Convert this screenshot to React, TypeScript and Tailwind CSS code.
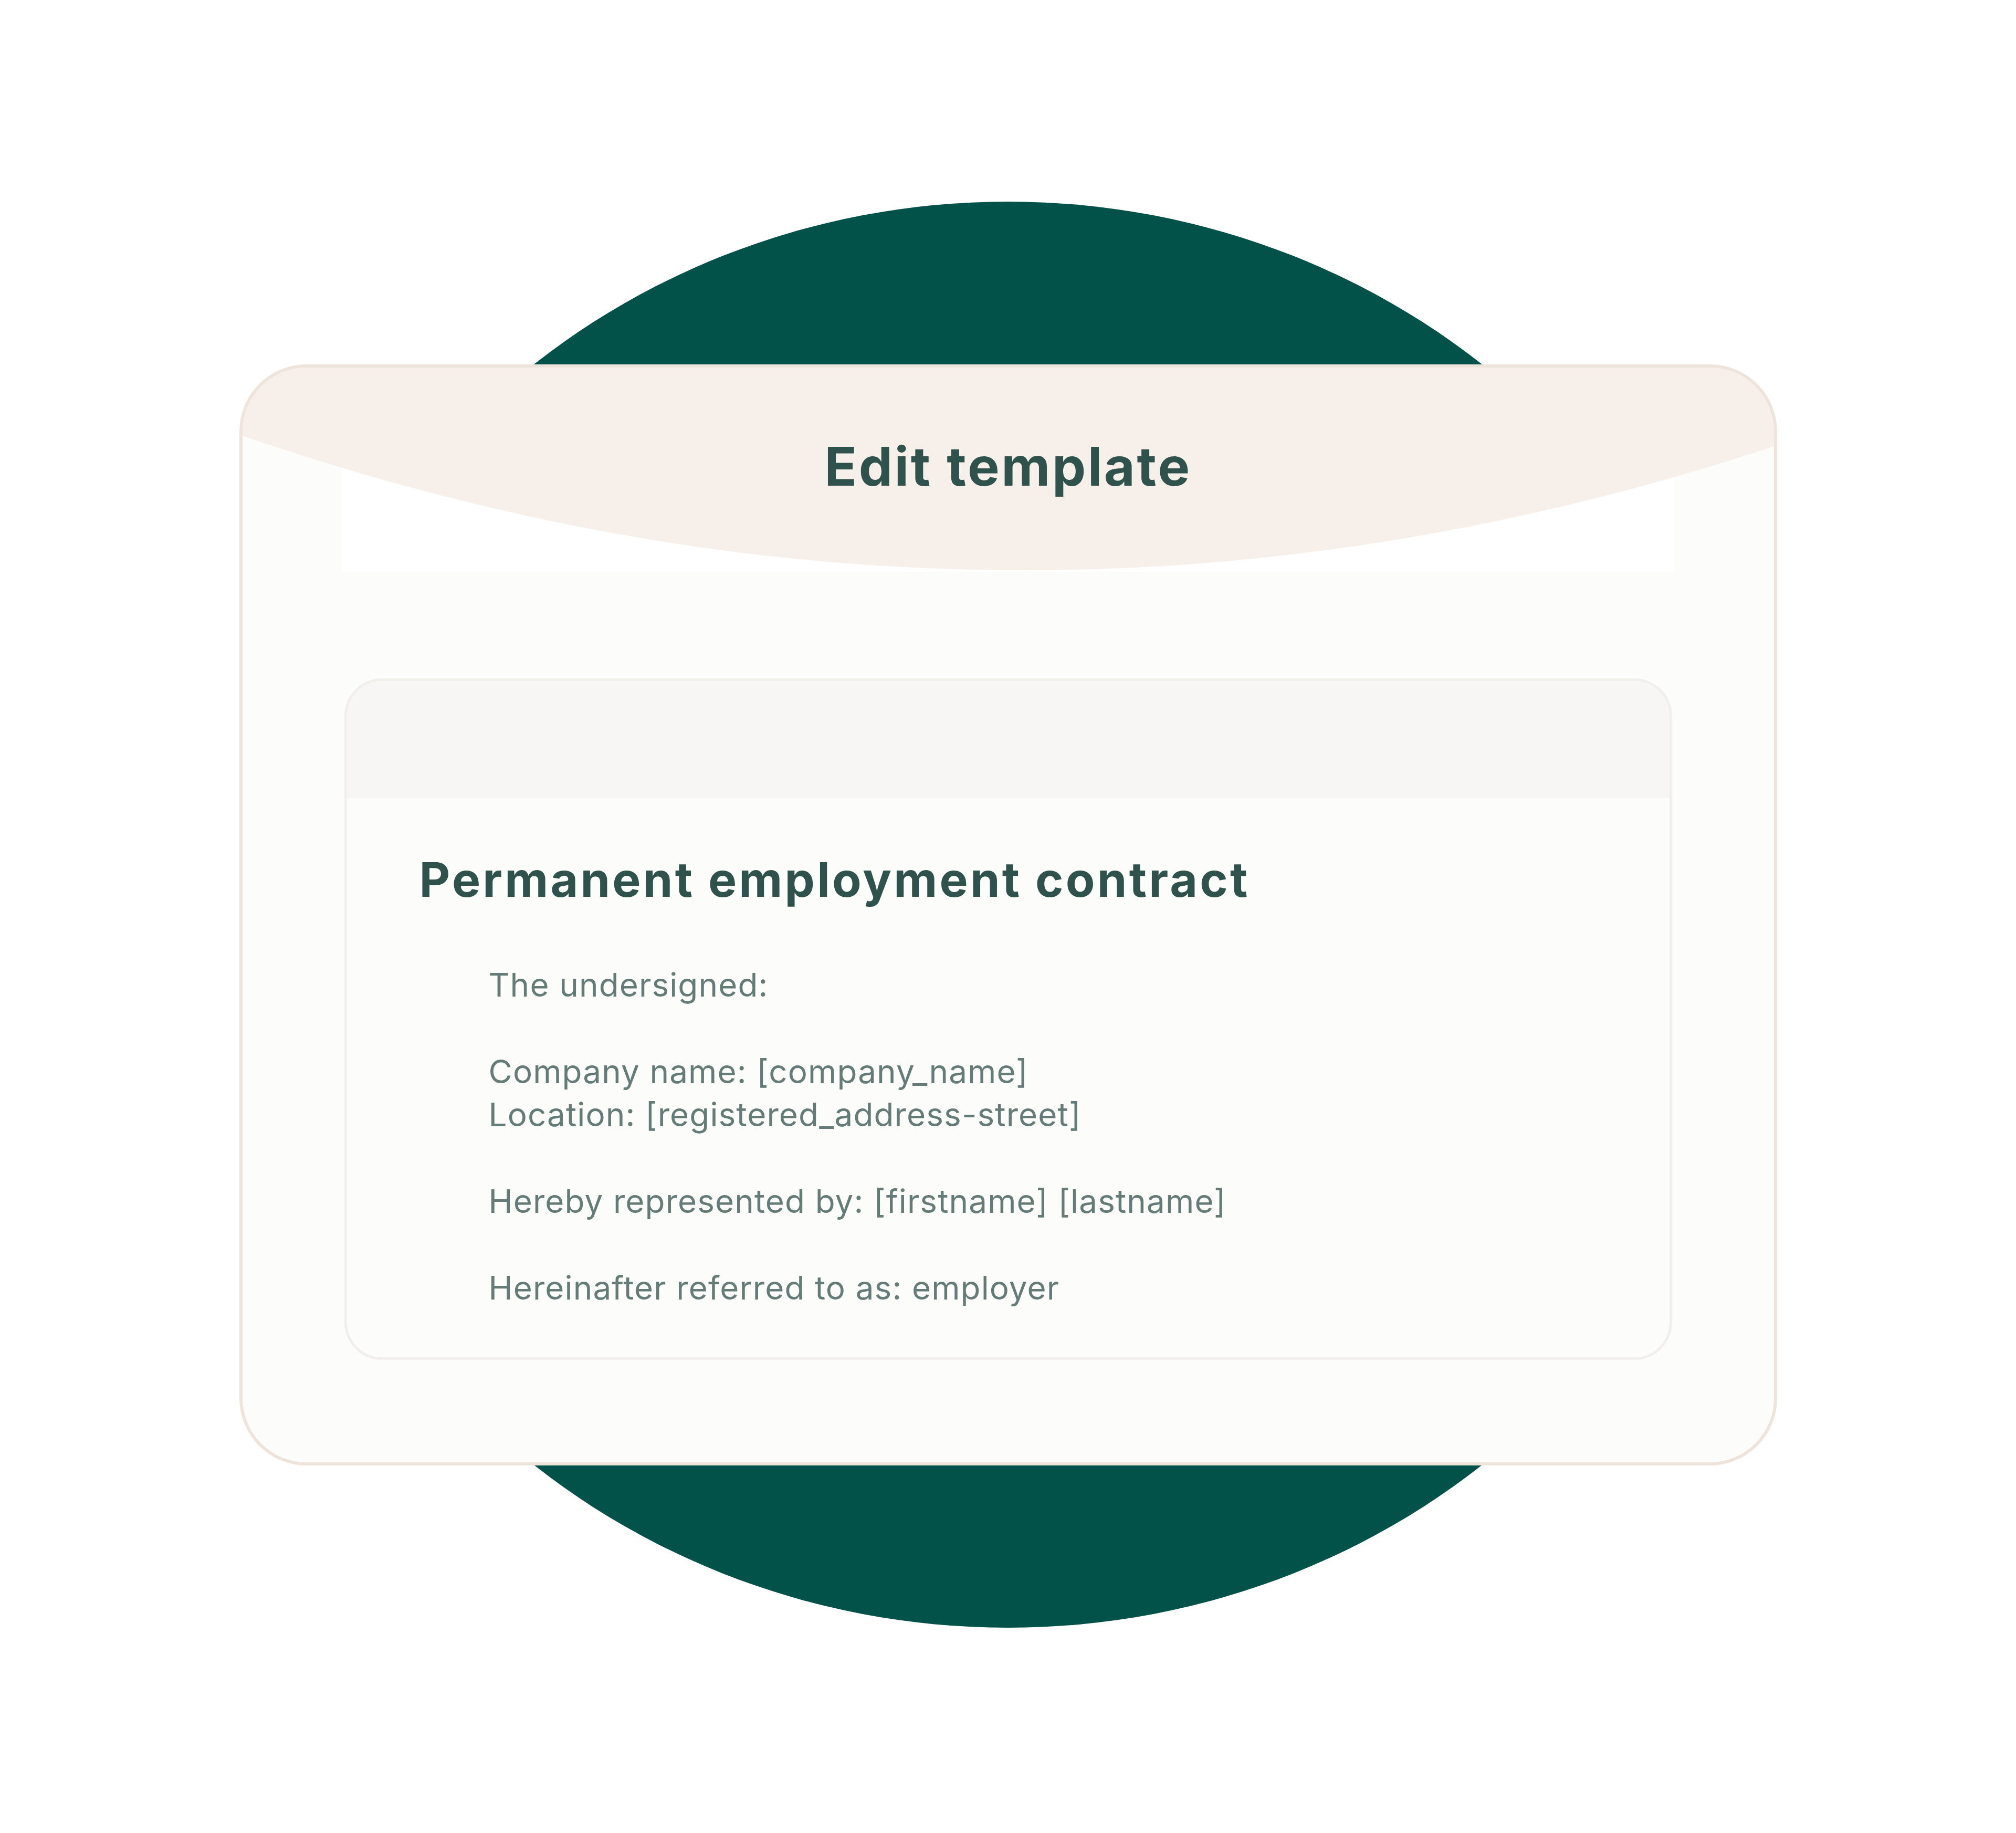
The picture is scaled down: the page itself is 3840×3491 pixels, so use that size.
const bodyLines: string[][] = [
  ['The undersigned:'],
  ['Company name: [company_name]', 'Location: [registered_address-street]'],
  ['Hereby represented by: [firstname] [lastname]'],
  ['Hereinafter referred to as: employer'],
];

function HeaderWave() {
  return (
    <svg
      className="col-start-1 row-start-1 h-[389px] w-full"
      viewBox="0 0 2917 389"
      preserveAspectRatio="none"
    >
      <path d="M0 0 H2917 V150 Q1458 632 0 130 Z" fill="#F7EFEA" />
    </svg>
  );
}

function TemplateCard() {
  return (
    <div className="col-start-1 row-start-1 w-[2929px] overflow-hidden rounded-[128px] border-[6px] border-[#EEE4DC] bg-[#FCFCFA]">
      {/* header */}
      <div className="grid h-[389px]">
        <div className="col-start-1 row-start-1 mx-[189px] bg-white" />
        <HeaderWave />
        <h2 className="col-start-1 row-start-1 mt-[127px] self-start justify-self-center text-[102px] font-bold leading-[1.2] tracking-[3.5px] text-[#30524C]">
          Edit template
        </h2>
      </div>

      {/* document preview */}
      <div className="mx-[194px] mt-[203px] mb-[195px] overflow-hidden rounded-[72px] border-[5px] border-[#F1EFEC] bg-[#FCFCFA]">
        <div className="h-[223px] bg-[#F7F6F4]" />
        <div className="pt-[100px] pb-[90px] pl-[138px]">
          <h3 className="text-[91px] font-bold leading-[110px] tracking-[4.2px] text-[#30524C]">
            Permanent employment contract
          </h3>
          <div className="mt-[105px] flex flex-col gap-[82.5px] pl-[132px] text-[62px] leading-[82.5px] tracking-[1.1px] text-[#647B77]">
            {bodyLines.map((para, i) => (
              <div key={i}>
                {para.map((line) => (
                  <p key={line}>{line}</p>
                ))}
              </div>
            ))}
          </div>
        </div>
      </div>
    </div>
  );
}

export default function App() {
  return (
    <div className="grid h-[3491px] w-[3840px] place-items-center bg-white pb-[7px] font-['Inter',sans-serif]">
      <div className="col-start-1 row-start-1 h-[2716px] w-[2840px] rounded-[50%] bg-[#03524A]" />
      <TemplateCard />
    </div>
  );
}
